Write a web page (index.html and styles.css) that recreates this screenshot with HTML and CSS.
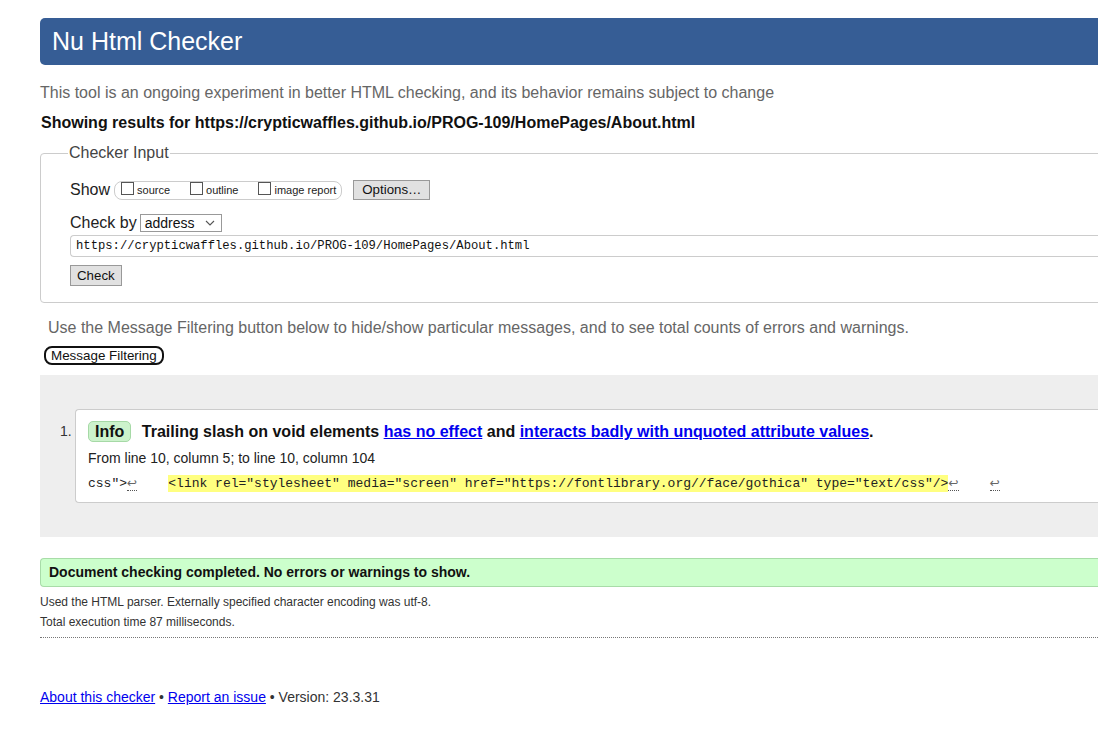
FILE: index.html
```html
<!DOCTYPE html>
<html lang="en">
<head>
<meta charset="utf-8">
<title>Nu Html Checker</title>
<link rel="stylesheet" href="styles.css">
</head>
<body>
<div class="page">
  <h1 class="title">Nu Html Checker</h1>
  <p class="intro">This tool is an ongoing experiment in better HTML checking, and its behavior remains subject to change</p>
  <p class="showing">Showing results for https://crypticwaffles.github.io/PROG-109/HomePages/About.html</p>

  <fieldset class="input-box">
    <legend class="legend">Checker Input</legend>
    <div class="row show-row">
      <span class="label">Show</span>
      <span class="checks">
        <span class="check"><span class="cb"></span><span class="cb-label">source</span></span>
        <span class="check"><span class="cb"></span><span class="cb-label">outline</span></span>
        <span class="check"><span class="cb"></span><span class="cb-label">image report</span></span>
      </span>
      <span class="btn options">Options…</span>
    </div>
    <div class="row by-row">
      <span class="label">Check by</span>
      <span class="select">address
        <svg class="chev" width="10" height="6" viewBox="0 0 10 6"><path d="M1 1 L5 5 L9 1" fill="none" stroke="#555" stroke-width="1.1"/></svg>
      </span>
    </div>
    <div class="url">https://crypticwaffles.github.io/PROG-109/HomePages/About.html</div>
    <div class="row"><span class="btn check-btn">Check</span></div>
  </fieldset>

  <p class="filter-text">Use the Message Filtering button below to hide/show particular messages, and to see total counts of errors and warnings.</p>
  <div class="filter-btn">Message Filtering</div>

  <div class="results">
    <div class="msg-row">
      <span class="num">1.</span>
      <div class="msg">
        <p class="msg-title"><span class="badge">Info</span> Trailing slash on void elements <a class="link" href="#">has no effect</a> and <a class="link" href="#">interacts badly with unquoted attribute values</a>.</p>
        <p class="loc">From line 10, column 5; to line 10, column 104</p>
        <p class="extract">css"&gt;<b class="lf">↩</b>    <span class="hl">&lt;link rel="stylesheet" media="screen" href="https://fontlibrary.org//face/gothica" type="text/css"/&gt;</span><b class="lf">↩</b>    <b class="lf">↩</b></p>
      </div>
    </div>
  </div>

  <p class="success">Document checking completed. No errors or warnings to show.</p>
  <p class="small">Used the HTML parser. Externally specified character encoding was utf-8.</p>
  <p class="small last">Total execution time 87 milliseconds.</p>

  <p class="footer"><a class="link" href="#">About this checker</a> • <a class="link" href="#">Report an issue</a> • Version: 23.3.31</p>
</div>
</body>
</html>
```
FILE: styles.css
```css
html, body {
  margin: 0;
  padding: 0;
  overflow: hidden;
  background: #fff;
}
body {
  font-family: "Liberation Sans", Arial, sans-serif;
  color: #222;
}
.page {
  width: 1120px;
  padding-left: 40px;
  padding-top: 18px;
}
.title {
  margin: 0;
  height: 47px;
  line-height: 47px;
  background: #365d95;
  color: #fff;
  font-size: 25px;
  font-weight: normal;
  padding-left: 12px;
  border-radius: 5px 0 0 5px;
}
.intro {
  margin: 18px 0 0;
  font-size: 16px;
  line-height: 20px;
  color: #666;
}
.showing {
  margin: 10px 0 0 1px;
  font-size: 16px;
  line-height: 20px;
  font-weight: bold;
  color: #111;
}
.input-box {
  margin: 11px 0 0;
  border: 1px solid #ccc;
  border-radius: 4px;
  padding: 0 0 16px 29px;
}
.legend {
  font-size: 16px;
  line-height: 18px;
  color: #444;
  padding: 0 1px;
  margin-left: -2px;
}
.row {
  display: flex;
  align-items: center;
}
.show-row {
  margin-top: 18px;
  height: 20px;
}
.label {
  font-size: 16px;
  color: #222;
}
.checks {
  display: flex;
  align-items: center;
  height: 17px;
  margin-left: 4px;
  border: 1px solid #ccc;
  border-radius: 8px;
  padding: 0 5px 0 6px;
  gap: 20px;
}
.check {
  display: flex;
  align-items: center;
}
.cb {
  width: 11px;
  height: 11px;
  border: 1px solid #555;
  margin-right: 3px;
  margin-top: -4px;
  background: #fff;
}
.cb-label {
  font-size: 11px;
  color: #222;
}
.btn {
  display: inline-block;
  background: #e1e1e1;
  border: 1px solid #999;
  font-size: 13.3px;
  color: #111;
  line-height: 18px;
  padding: 0 7px;
}
.options {
  margin-left: 11px;
  padding: 0 8px;
}
.by-row {
  margin-top: 14px;
  height: 18px;
}
.select {
  margin-left: 3px;
  width: 76px;
  height: 16px;
  border: 1px solid #999;
  font-size: 14px;
  line-height: 16px;
  padding-left: 4px;
  box-sizing: content-box;
  display: flex;
  align-items: center;
  justify-content: space-between;
  color: #111;
}
.chev {
  margin-right: 6px;
}
.url {
  margin-top: 3px;
  height: 20px;
  line-height: 20px;
  border: 1px solid #ccc;
  border-right: none;
  border-radius: 4px 0 0 4px;
  font-family: "Liberation Mono", "DejaVu Sans Mono", monospace;
  font-size: 12.2px;
  padding-left: 5px;
  color: #111;
}
.check-btn {
  margin-top: 8px;
  padding: 0 6px;
  line-height: 19px;
}
.filter-text {
  margin: 15px 0 0 8px;
  font-size: 16px;
  line-height: 20px;
  color: #666;
}
.filter-btn {
  width: fit-content;
  margin: 8px 0 0 4px;
  border: 2px solid #111;
  border-radius: 8px;
  font-size: 13.4px;
  line-height: 15px;
  padding: 0 5px 0 5px;
  color: #111;
}
.results {
  margin-top: 10px;
  background: #eee;
  padding: 34px 0 34px 20px;
}
.msg-row {
  display: flex;
  align-items: flex-start;
}
.num {
  width: 15px;
  font-size: 14px;
  margin-top: 14px;
  color: #333;
}
.msg {
  flex: 1;
  background: #fff;
  border: 1px solid #ccc;
  border-right: none;
  border-radius: 4px 0 0 4px;
  padding: 11px 0 9px 12px;
}
.msg p {
  margin: 0;
}
.msg-title {
  font-size: 16px;
  font-weight: bold;
  line-height: 22px;
  color: #111;
}
.badge {
  display: inline-block;
  background: #ccf2cc;
  border: 1px solid #a6d9a6;
  border-radius: 5px;
  padding: 0 6px;
  line-height: 19px;
  margin-right: 6px;
}
.link {
  color: #0000ee;
  text-decoration: underline;
}
.loc {
  margin-top: 6px !important;
  font-size: 14px;
  line-height: 18px;
  color: #222;
}
.extract {
  margin-top: 8px !important;
  font-family: "Liberation Mono", "DejaVu Sans Mono", monospace;
  font-size: 13px;
  line-height: 18px;
  white-space: pre;
  color: #222;
}
.hl {
  background: #ffff80;
  padding: 1px 0;
}
.lf {
  font-weight: normal;
  color: #666;
  font-family: "DejaVu Sans", sans-serif;
  font-size: 12px;
  line-height: 14px;
  border-bottom: 1px dotted #555;
}
.success {
  margin: 21px 0 0;
  background: #ccffcc;
  border: 1px solid #a8dca8;
  border-right: none;
  border-radius: 4px 0 0 4px;
  font-size: 14px;
  font-weight: bold;
  line-height: 27px;
  padding-left: 8px;
  color: #111;
}
.small {
  margin: 8px 0 0;
  font-size: 12px;
  line-height: 14px;
  color: #333;
}
.small.last {
  margin-top: 6px;
  padding-bottom: 8px;
  border-bottom: 1px dotted #777;
}
.footer {
  margin: 50px 0 0;
  font-size: 14px;
  line-height: 18px;
  color: #333;
}
```
